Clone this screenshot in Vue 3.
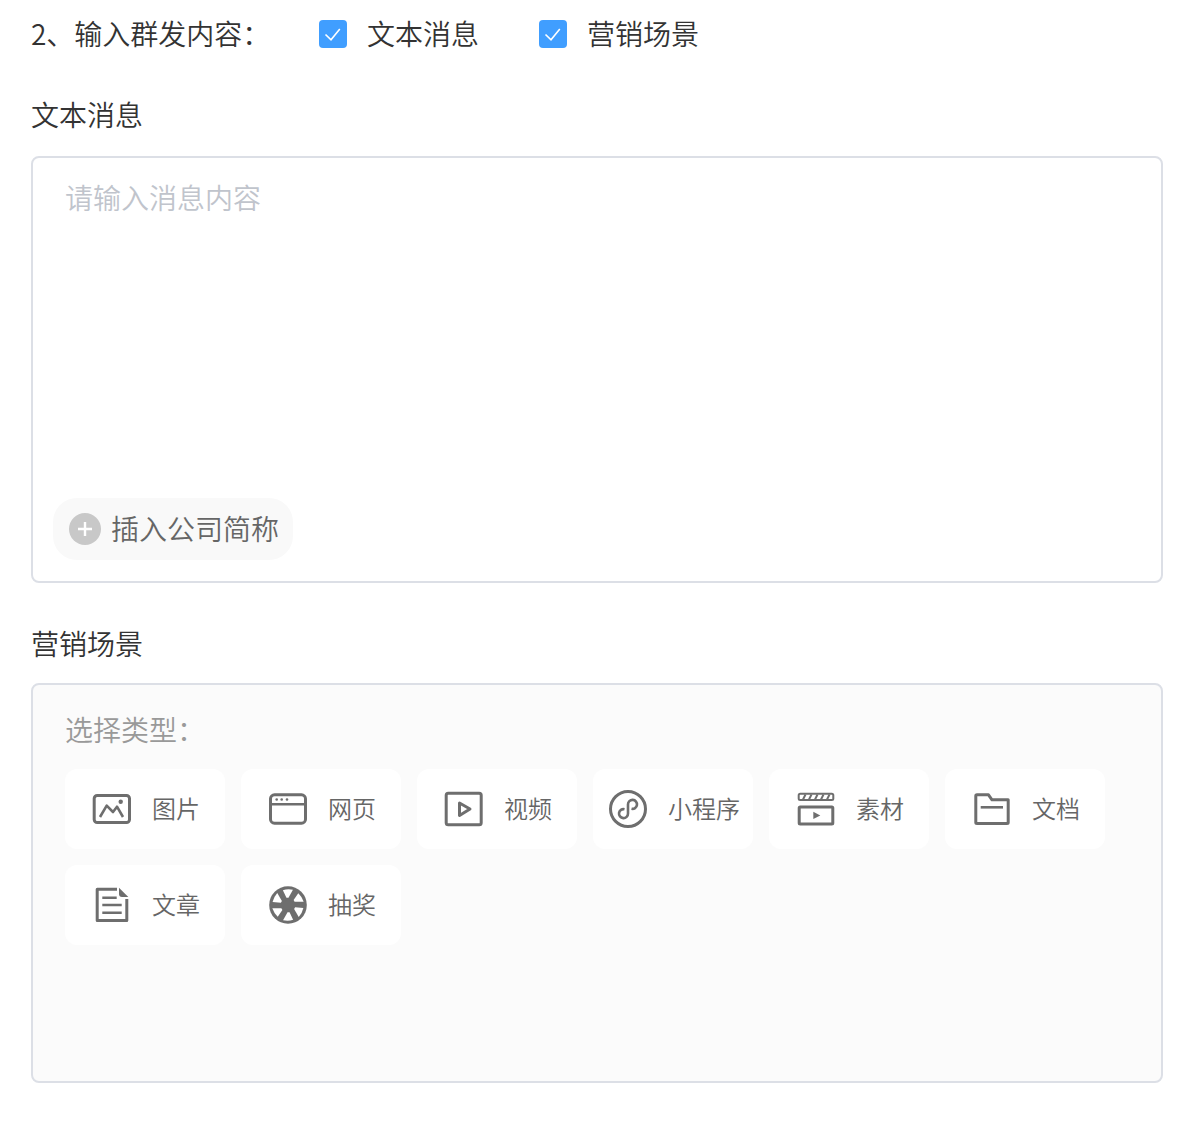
<script setup>
const wedges = [-8, 52, 112, 172, 232, 292]
const slashes = [9, 15, 21, 27, 33]
</script>

<template>
  <div class="page">
    <div class="top-row">
      <span class="top-label">2、输入群发内容：</span>
      <label class="check">
        <span class="box-check"><svg viewBox="0 0 28 28" width="28" height="28"><path d="M6.5 14.5L12 19.8 20.8 9" fill="none" stroke="#fff" stroke-width="1.6" /></svg></span>
        <span>文本消息</span>
      </label>
      <label class="check">
        <span class="box-check"><svg viewBox="0 0 28 28" width="28" height="28"><path d="M6.5 14.5L12 19.8 20.8 9" fill="none" stroke="#fff" stroke-width="1.6" /></svg></span>
        <span>营销场景</span>
      </label>
    </div>

    <div class="title first">文本消息</div>
    <div class="text-box">
      <div class="placeholder">请输入消息内容</div>
      <div class="pill">
        <svg class="plus" viewBox="0 0 32 32" width="32" height="32">
          <circle cx="16" cy="16" r="16" fill="#c8c8c8" />
          <path d="M16 9v14M9 16h14" stroke="#fff" stroke-width="2.4" />
        </svg>
        <span class="pill-text">插入公司简称</span>
      </div>
    </div>

    <div class="title second">营销场景</div>
    <div class="scene-box">
      <div class="scene-label">选择类型：</div>
      <div class="cards">
        <div class="card">
          <svg class="ico" viewBox="0 0 42 42" width="42" height="42">
            <rect x="4.2" y="7.5" width="35.3" height="27" rx="3" class="ln" />
            <path d="M10 29l6.7-11.3L23 24l4-5.3L33 29" class="ln thin" />
            <circle cx="30.7" cy="13.7" r="2.2" class="fl" />
          </svg>
          <span class="lbl">图片</span>
        </div>
        <div class="card">
          <svg class="ico" viewBox="0 0 42 42" width="42" height="42">
            <rect x="4.5" y="6.8" width="35" height="28.4" rx="4" class="ln" />
            <path d="M4.5 16.3h35" class="ln thin" />
            <circle cx="10.7" cy="11.5" r="1.3" class="fl" />
            <circle cx="15.7" cy="11.5" r="1.3" class="fl" />
            <circle cx="21" cy="11.5" r="1.3" class="fl" />
          </svg>
          <span class="lbl">网页</span>
        </div>
        <div class="card">
          <svg class="ico" viewBox="0 0 42 42" width="42" height="42">
            <rect x="4.2" y="5.2" width="35" height="31.6" rx="2" class="ln" />
            <path d="M17.5 15L28 21l-10.5 6.5z" class="ln" />
          </svg>
          <span class="lbl">视频</span>
        </div>
        <div class="card">
          <svg class="ico" viewBox="0 0 42 42" width="42" height="42">
            <circle cx="22" cy="21" r="17.5" class="ln" />
            <path d="M18.5 21.2A4.5 4.5 0 1 0 22 25.5V16.5A4.5 4.5 0 1 1 25.5 20.8" class="ln thin" />
          </svg>
          <span class="lbl">小程序</span>
        </div>
        <div class="card">
          <svg class="ico" viewBox="0 0 42 42" width="42" height="42">
            <rect x="4.7" y="5.7" width="34.6" height="6.4" rx="1.5" class="ln band" />
            <path v-for="s in slashes" :key="s" :d="`M${s} 11.5l2.5-5`" class="ln band" />
            <rect x="5.2" y="19" width="33.6" height="17" rx="1" class="ln" />
            <path d="M19.3 23.7l7 3.7-7 3.6z" class="fl" />
          </svg>
          <span class="lbl">素材</span>
        </div>
        <div class="card">
          <svg class="ico" viewBox="0 0 42 42" width="42" height="42">
            <path d="M5.8 8Q5.8 6.8 7 6.8H18.5L22 11.8H38.2V34.5Q38.2 35.5 37 35.5H7Q5.8 35.5 5.8 34.5Z" class="ln" />
            <path d="M10.7 19.3H33" class="ln thin" />
          </svg>
          <span class="lbl">文档</span>
        </div>
        <div class="card">
          <svg class="ico" viewBox="0 0 42 42" width="42" height="42">
            <path d="M27 5.2H7.2V36.5H36.8V15" class="ln" />
            <path d="M29 3.8L38.3 13H32Q29 13 29 10Z" class="fl" />
            <path d="M12.3 13.7H26.7M12.3 21H31.7M12.3 28.7H31.7" class="ln thin" />
          </svg>
          <span class="lbl">文章</span>
        </div>
        <div class="card">
          <svg class="ico" viewBox="0 0 42 42" width="42" height="42">
            <circle cx="22" cy="21" r="18.8" class="fl" />
            <path v-for="w in wedges" :key="w" d="M21.5 13.5L23.5 13.8L29 6.6Q24 4.8 19 5.6Z" fill="#fff" :transform="`rotate(${w} 22 21)`" />
            <circle cx="22" cy="21" r="5" class="fl" />
          </svg>
          <span class="lbl">抽奖</span>
        </div>
      </div>
    </div>
  </div>
</template>

<style>
html, body { background: #fff; }
</style>

<style scoped>
.page {
  padding: 0 36px 38px 31px;
  font-family: "Noto Sans CJK SC", "Liberation Sans", sans-serif;
  font-size: 28px;
  font-weight: 350;
  color: #333;
}
.top-row {
  height: 66px;
  padding-bottom: 2px;
  display: flex;
  align-items: center;
}
.top-label { width: 288px; }
.check {
  display: flex;
  align-items: center;
  gap: 20px;
  margin-right: 60px;
}
.box-check {
  width: 28px;
  height: 28px;
  background: #409eff;
  border-radius: 4px;
  display: block;
  margin-top: 2px;
}
.box-check svg { display: block; }
.title { line-height: 40px; }
.title.first { margin: 26px 0 22px; }
.title.second { margin: 40px 0 20px; }
.text-box {
  box-sizing: border-box;
  height: 427px;
  border: 2px solid #dcdfe6;
  border-radius: 8px;
  padding: 19px 20px 21px;
  display: flex;
  flex-direction: column;
  justify-content: space-between;
  align-items: flex-start;
}
.placeholder {
  line-height: 40px;
  margin-left: 12px;
  color: #c0c4cc;
}
.pill {
  height: 62px;
  box-sizing: border-box;
  padding: 0 14px 0 16px;
  border-radius: 24px;
  background: #f9f9f9;
  color: #666;
  display: flex;
  align-items: center;
  gap: 10px;
}
.pill-text { padding-bottom: 2px; }
.plus { display: block; }
.scene-box {
  box-sizing: border-box;
  height: 400px;
  border: 2px solid #dcdfe6;
  border-radius: 8px;
  background: #fbfbfb;
  padding: 24px 32px;
}
.scene-label {
  line-height: 40px;
  color: #999;
}
.cards {
  margin-top: 20px;
  display: flex;
  flex-wrap: wrap;
  gap: 16px;
}
.card {
  width: 160px;
  height: 80px;
  background: #fff;
  border-radius: 12px;
  font-size: 24px;
  color: #666;
  display: flex;
  align-items: center;
  justify-content: center;
  gap: 20px;
}
.lbl { padding-bottom: 4px; }
.ico { display: block; flex: none; overflow: visible; }
.ln {
  fill: none;
  stroke: #6e6e6e;
  stroke-width: 3;
  stroke-linejoin: round;
}
.thin { stroke-width: 2.6; }
.band { stroke-width: 2; }
.fl { fill: #6e6e6e; }
</style>
